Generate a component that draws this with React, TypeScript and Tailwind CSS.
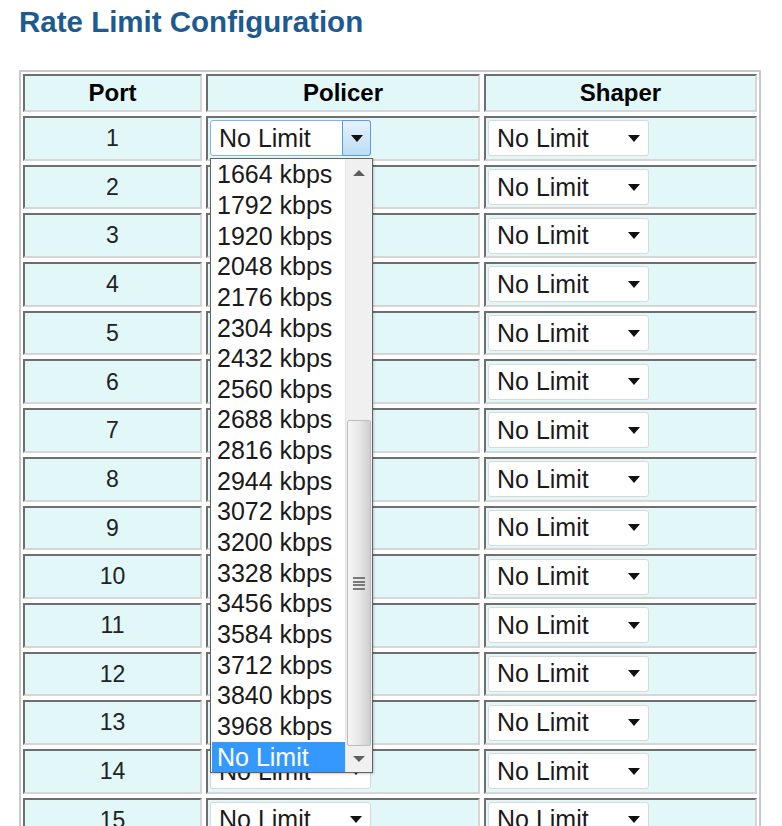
import React from 'react';

const ports = Array.from({ length: 15 }, (_, i) => i + 1);
const rates = Array.from({ length: 19 }, (_, i) => `${1664 + i * 128} kbps`);

const cellClass =
  'flex items-center border-2 border-t-[#6e6e6e] border-l-[#6e6e6e] border-b-[#d6d6d6] border-r-[#d6d6d6] bg-[#e1f7f8]';

const Arrow: React.FC<{ color?: string; up?: boolean }> = ({ color = '#111', up }) => (
  <svg width="12" height="7" viewBox="0 0 12 7" className="shrink-0">
    <polygon points={up ? '0,7 12,7 6,0' : '0,0 12,0 6,7'} fill={color} />
  </svg>
);

const Select: React.FC = () => (
  <div className="flex h-[36px] w-[161px] items-center justify-between rounded-[3px] border border-[#d9d9d9] bg-white pl-[8px] pr-[8px] text-[25px] leading-none text-[#1a1a1a]">
    <span>No Limit</span>
    <Arrow />
  </div>
);

// policer selects hidden behind the open list: same box, no visible text
const CoveredSelect: React.FC = () => (
  <div className="h-[36px] w-[161px] rounded-[3px] border border-[#d9d9d9] bg-white" />
);

const OpenSelect: React.FC = () => (
  <div className="relative h-[36px] w-[161px]">
    <div className="flex h-full w-full items-center rounded-[3px] border border-[#7eb4ea] bg-white pl-[8px] text-[25px] leading-none text-[#1a1a1a]">
      <span className="flex-1">No Limit</span>
      <div className="-mr-px flex h-[36px] w-[29px] items-center justify-center rounded-r-[3px] border border-[#569de5] bg-gradient-to-b from-[#e6f2fc] to-[#bcdcf7]">
        <Arrow />
      </div>
    </div>
    <div className="absolute left-0 top-[38px] z-10 flex h-[615px] w-[163px] border border-[#646464] bg-white shadow-[1px_1px_2px_rgba(0,0,0,0.2)]">
      <div className="flex flex-1 flex-col pl-px">
        {rates.map((r) => (
          <div key={r} className="h-[30.65px] pl-[5px] text-[25px] leading-[30.65px] text-[#1a1a1a]">
            {r}
          </div>
        ))}
        <div className="h-[30.65px] bg-[#3399ff] pl-[5px] text-[25px] leading-[30.65px] text-white">No Limit</div>
      </div>
      <div className="flex w-[27px] flex-col border-l border-[#e6e6e6] bg-[#f0f0f0]">
        <div className="flex h-[28px] items-center justify-center">
          <svg width="12" height="6" viewBox="0 0 12 6">
            <polygon points="0,6 12,6 6,0" fill="#5e5e5e" />
          </svg>
        </div>
        <div className="flex-1" />
        <div className="mx-[1px] flex h-[326px] items-center justify-center rounded-[2px] border border-[#bcbcbc] bg-gradient-to-r from-[#f6f6f6] via-[#e8e8e8] to-[#cfcfcf]">
          <div className="flex flex-col gap-[1.5px]">
            <div className="h-[2px] w-[12px] bg-[#7a7a7a]" />
            <div className="h-[2px] w-[12px] bg-[#7a7a7a]" />
            <div className="h-[2px] w-[12px] bg-[#7a7a7a]" />
            <div className="h-[2px] w-[12px] bg-[#7a7a7a]" />
          </div>
        </div>
        <div className="flex h-[26px] items-center justify-center">
          <svg width="12" height="6" viewBox="0 0 12 6">
            <polygon points="0,0 12,0 6,6" fill="#5e5e5e" />
          </svg>
        </div>
      </div>
    </div>
  </div>
);

const App: React.FC = () => {
  return (
    <div className="h-[826px] w-[782px] overflow-hidden bg-white font-['Liberation_Sans',Arial,sans-serif]">
      <h1 className="ml-[19px] mt-[8px] text-[29.5px] font-bold leading-[28px] text-[#1d5b8f]">
        Rate Limit Configuration
      </h1>
      <div className="ml-[19px] mt-[34px] inline-block border-2 border-[#c9c9c9] p-[2px]">
        <div className="grid grid-cols-[179px_274px_273px] gap-[4px]">
          <div className={`${cellClass} h-[38px] justify-center text-[24px] font-bold text-black`}>Port</div>
          <div className={`${cellClass} h-[38px] justify-center text-[24px] font-bold text-black`}>Policer</div>
          <div className={`${cellClass} h-[38px] justify-center text-[24px] font-bold text-black`}>Shaper</div>
          {ports.map((p) => (
            <React.Fragment key={p}>
              <div className={`${cellClass} h-[44.7px] justify-center text-[23px] text-[#222]`}>{p}</div>
              <div className={`${cellClass} h-[44.7px] pl-[2px]`}>
                {p === 1 ? <OpenSelect /> : p < 14 ? <CoveredSelect /> : <Select />}
              </div>
              <div className={`${cellClass} h-[44.7px] pl-[2px]`}>
                <Select />
              </div>
            </React.Fragment>
          ))}
        </div>
      </div>
    </div>
  );
};

export default App;
